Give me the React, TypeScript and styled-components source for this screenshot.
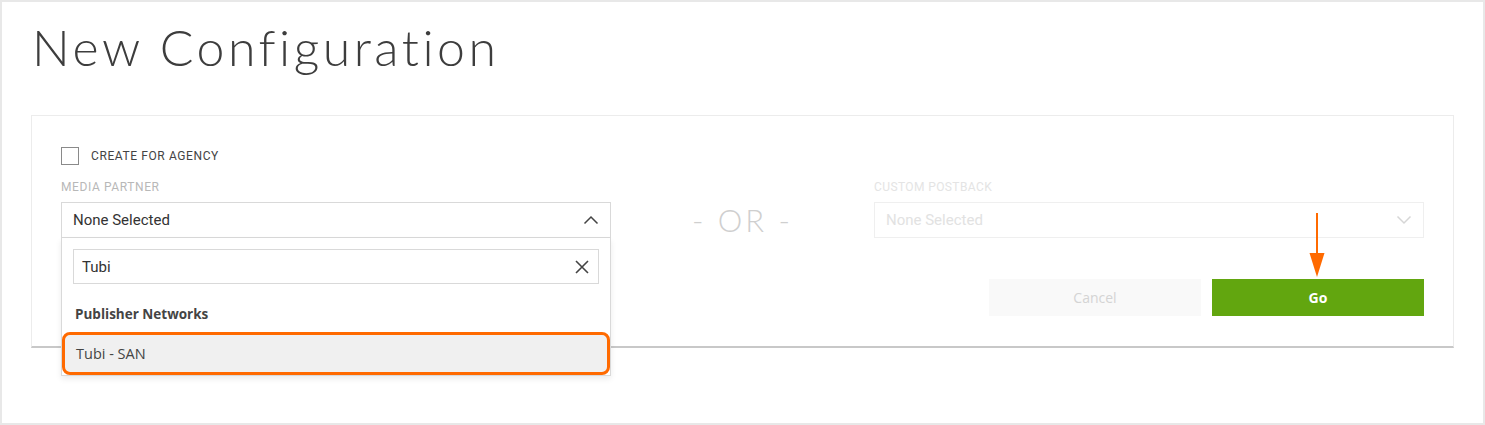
import React from 'react';
import styled, { createGlobalStyle } from 'styled-components';

const GlobalStyle = createGlobalStyle`
  html, body {
    margin: 0;
    padding: 0;
    background: #fff;
  }
  * {
    box-sizing: border-box;
  }
`;

const Frame = styled.div`
  width: 1485px;
  height: 425px;
  border: 2px solid #e8e8e8;
  padding: 0 29px;
  font-family: 'Open Sans', 'Liberation Sans', sans-serif;
  overflow: hidden;
`;

const Title = styled.h1`
  margin: 14px 0 0 1px;
  font-family: Lato, 'Liberation Sans', sans-serif;
  font-weight: 300;
  font-size: 50px;
  line-height: 62px;
  letter-spacing: 3.5px;
  color: #3d3d3d;
`;

const Card = styled.div`
  margin-top: 37px;
  border: 1px solid #ececec;
  border-bottom: 2px solid #c8c8c8;
  padding: 31px 29px 30px;
`;

const CheckRow = styled.label`
  display: flex;
  align-items: center;
  gap: 12px;
  height: 18px;
`;

const Box = styled.span`
  width: 18px;
  height: 18px;
  border: 1px solid #8a8a8a;
  background: #fff;
`;

const CheckText = styled.span`
  font-family: Roboto, 'Liberation Sans', sans-serif;
  font-size: 12px;
  color: #444;
  letter-spacing: 0.6px;
`;

const Fields = styled.div`
  display: grid;
  grid-template-columns: 550px 1fr 550px;
  margin-top: 15px;
`;

const Field = styled.div`
  position: relative;
  display: flex;
  flex-direction: column;
`;

const Label = styled.div<{ $faint?: boolean }>`
  font-family: Roboto, 'Liberation Sans', sans-serif;
  font-size: 12px;
  line-height: 14px;
  letter-spacing: ${(p) => (p.$faint ? '0.4px' : '0.6px')};
  color: ${(p) => (p.$faint ? '#e4e4e4' : '#b8b8b8')};
  margin-bottom: 8px;
`;

const Select = styled.div<{ $disabled?: boolean }>`
  height: 36px;
  border: 1px solid ${(p) => (p.$disabled ? '#efefef' : '#d9d9d9')};
  display: flex;
  align-items: center;
  justify-content: space-between;
  padding: 0 11px;
  font-family: Roboto, 'Liberation Sans', sans-serif;
  font-size: 15px;
  color: ${(p) => (p.$disabled ? '#e2e2e2' : '#333')};
`;

const Dropdown = styled.div`
  position: absolute;
  top: 58px;
  left: 0;
  right: 0;
  background: #fff;
  border: 1px solid #d9d9d9;
  border-top: none;
  box-shadow: 0 3px 6px rgba(0, 0, 0, 0.08);
  padding: 11px 0 0;
  z-index: 5;
`;

const Search = styled.div`
  margin: 0 11px;
  height: 35px;
  border: 1px solid #d9d9d9;
  display: flex;
  align-items: center;
  justify-content: space-between;
  padding: 0 9px 0 8px;
  font-family: Roboto, 'Liberation Sans', sans-serif;
  font-size: 15px;
  color: #333;
`;

const Group = styled.div`
  padding: 21px 13px 9px;
  font-family: 'Open Sans', 'Liberation Sans', sans-serif;
  font-weight: 700;
  font-size: 13.5px;
  color: #444;
`;

const Option = styled.div`
  height: 43px;
  display: flex;
  align-items: center;
  padding: 0 11px;
  background: #f0f0f0;
  border: 3px solid #ff6a00;
  border-radius: 8px;
  font-family: 'Open Sans', 'Liberation Sans', sans-serif;
  font-size: 14.5px;
  color: #444;
`;

const Or = styled.div`
  align-self: end;
  height: 36px;
  display: flex;
  align-items: center;
  justify-content: center;
  font-family: Lato, 'Liberation Sans', sans-serif;
  font-weight: 300;
  font-size: 31px;
  letter-spacing: 3px;
  color: #cfcfcf;
`;

const Actions = styled.div`
  position: relative;
  display: flex;
  justify-content: flex-end;
  gap: 11px;
  margin-top: 41px;
`;

const Button = styled.button<{ $primary?: boolean }>`
  width: 212px;
  height: 37px;
  border: none;
  background: ${(p) => (p.$primary ? '#62a60f' : '#f9f9f9')};
  color: ${(p) => (p.$primary ? '#fff' : '#d4d4d4')};
  font-family: 'Open Sans', 'Liberation Sans', sans-serif;
  font-weight: ${(p) => (p.$primary ? 700 : 400)};
  font-size: 14px;
`;

const Arrow = styled.svg`
  position: absolute;
  right: 98px;
  top: -66px;
`;

const Chevron = ({ up, color }: { up?: boolean; color: string }) => (
  <svg width="16" height="10" viewBox="0 0 16 10">
    <path
      d={up ? 'M1.5 8.5 L8 2 L14.5 8.5' : 'M1.5 1.5 L8 8 L14.5 1.5'}
      fill="none"
      stroke={color}
      strokeWidth="1.5"
    />
  </svg>
);

const Clear = () => (
  <svg width="14" height="14" viewBox="0 0 14 14">
    <path d="M1 1 L13 13 M13 1 L1 13" stroke="#444" strokeWidth="1.6" />
  </svg>
);

const App = () => {
  return (
    <>
      <GlobalStyle />
      <Frame>
        <Title>New Configuration</Title>
        <Card>
          <CheckRow>
            <Box />
            <CheckText>CREATE FOR AGENCY</CheckText>
          </CheckRow>
          <Fields>
            <Field>
              <Label>MEDIA PARTNER</Label>
              <Select>
                None Selected
                <Chevron up color="#444" />
              </Select>
              <Dropdown>
                <Search>
                  Tubi
                  <Clear />
                </Search>
                <Group>Publisher Networks</Group>
                <Option>Tubi - SAN</Option>
              </Dropdown>
            </Field>
            <Or>- OR -</Or>
            <Field>
              <Label $faint>CUSTOM POSTBACK</Label>
              <Select $disabled>
                None Selected
                <Chevron color="#d6d6d6" />
              </Select>
            </Field>
          </Fields>
          <Actions>
            <Button>Cancel</Button>
            <Button $primary>Go</Button>
            <Arrow width="18" height="66" viewBox="0 0 18 66">
              <line x1="9" y1="0" x2="9" y2="44" stroke="#ff6a00" strokeWidth="2" />
              <path d="M1.5 40 L16.5 40 L9 64 Z" fill="#ff6a00" />
            </Arrow>
          </Actions>
        </Card>
      </Frame>
    </>
  );
};

export default App;
